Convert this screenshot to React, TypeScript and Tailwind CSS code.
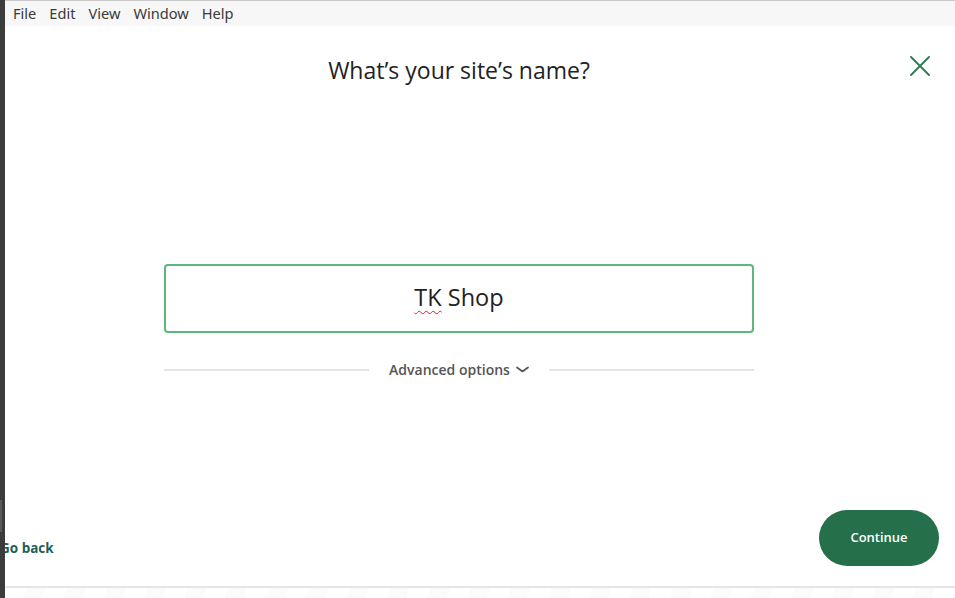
import React from "react"

const menuItems = ["File", "Edit", "View", "Window", "Help"]

export default function App() {
  return (
    <div className="flex h-[598px] w-[955px] overflow-hidden bg-white">
      {/* window edge */}
      <div className="relative z-10 flex w-[5px] shrink-0 flex-col bg-[#3c3c3c]">
        <div className="mt-[500px] h-[32px] w-[2px] bg-[#5a5a5a]" />
      </div>

      <div className="flex flex-1 flex-col">
        {/* Menu bar */}
        <div className="flex h-[26px] items-center gap-[13px] border-t border-[#c9c9c9] bg-[#f7f7f7] pl-[8px] font-['Noto_Sans',sans-serif] text-[14.6px] text-[#3a3a3a]">
          {menuItems.map((item) => (
            <span key={item}>{item}</span>
          ))}
        </div>

        {/* Dialog content */}
        <div className="relative flex flex-1 flex-col font-['Open_Sans',sans-serif]">
          <button className="absolute right-[25px] top-[30px] text-[#2b7a52]">
            <svg width="20" height="20" viewBox="0 0 20 20" fill="none" stroke="currentColor" strokeWidth="1.8" strokeLinecap="round">
              <path d="M1 1L19 19M19 1L1 19" />
            </svg>
          </button>

          <div className="flex w-[908px] flex-1 flex-col items-center">
            <h1 className="mt-[29px] text-[23px] leading-[30px] text-[#222]">What’s your site’s name?</h1>

            <div className="mt-[179px] flex h-[69px] w-[590px] items-center justify-center rounded-[4px] border-2 border-[#5cb87c] pb-[2px] text-[23.5px] text-[#222]">
              <span>
                <span className="underline decoration-[#e02020] decoration-wavy decoration-1 underline-offset-[4px]">TK</span> Shop
              </span>
            </div>

            <div className="mt-[26px] flex w-[590px] items-center">
              <div className="h-[2px] flex-1 bg-[#e5e5e5]" />
              <div className="flex items-center gap-[6px] px-[20px] text-[14px] font-semibold text-[#555]">
                <span>Advanced options</span>
                <svg width="13" height="8" viewBox="0 0 13 8" fill="none" stroke="#555" strokeWidth="1.7" strokeLinecap="round" strokeLinejoin="round">
                  <path d="M1 1.5L6.5 5.5L12 1.5" />
                </svg>
              </div>
              <div className="h-[2px] flex-1 bg-[#e5e5e5]" />
            </div>
          </div>

          {/* Footer */}
          <div className="flex items-center justify-between pb-[20px] pr-[16px]">
            <span className="ml-[-5px] mt-[20px] text-[13.5px] font-bold text-[#1f5f52]">Go back</span>
            <button className="h-[56px] w-[120px] rounded-full bg-[#25704a] text-[13px] font-semibold text-white">
              Continue
            </button>
          </div>
        </div>

        {/* Bottom edge */}
        <div className="h-[2px] bg-[#e6e6e6]" />
        <div className="h-[10px] bg-[repeating-linear-gradient(110deg,#ffffff_0px,#ffffff_20px,#fbfbfb_20px,#fbfbfb_38px)]" />
      </div>
    </div>
  )
}
